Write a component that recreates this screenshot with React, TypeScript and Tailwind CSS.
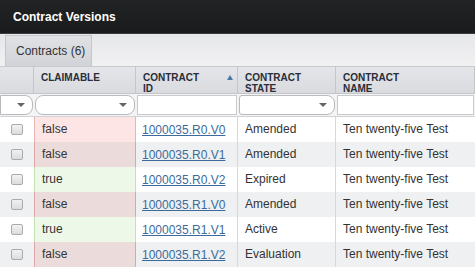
const rows = [
  { claimable: false, id: "1000035.R0.V0", state: "Amended" },
  { claimable: false, id: "1000035.R0.V1", state: "Amended" },
  { claimable: true, id: "1000035.R0.V2", state: "Expired" },
  { claimable: false, id: "1000035.R1.V0", state: "Amended" },
  { claimable: true, id: "1000035.R1.V1", state: "Active" },
  { claimable: false, id: "1000035.R1.V2", state: "Evaluation" },
]

const cols = "grid grid-cols-[34px_102px_102px_98px_1fr]"

function Caret() {
  return <span className="absolute right-[9px] top-[9px] w-0 h-0 border-l-[4px] border-r-[4px] border-t-[4px] border-l-transparent border-r-transparent border-t-[#666]" />
}

export default function App() {
  return (
    <div className="w-[475px] h-[273px] bg-white overflow-hidden font-['Liberation_Sans',Arial,sans-serif] text-[12px] text-[#333]">
      {/* title bar */}
      <div className="h-[34px] bg-gradient-to-b from-[#222325] to-[#1a1b1d] border-b border-[#3a3b3d] flex items-center px-[13px]">
        <span className="text-white font-bold text-[12px]">Contract Versions</span>
      </div>

      {/* tabs */}
      <div className="h-[33px] bg-gradient-to-b from-[#e6e7e9] to-[#f1f1f2] border-b border-[#c8cacd] flex items-end pl-[5px]">
        <div className="h-[31px] w-[87px] bg-gradient-to-b from-[#e0e2e5] to-[#d0d3d7] border-x border-t border-[#c4c6ca] flex items-center pl-[10px] text-[12px] text-[#333]">
          Contracts (6)
        </div>
      </div>

      {/* header */}
      <div className={`${cols} h-[27px] bg-gradient-to-b from-[#e3e5e8] to-[#d9dbdf] border-b border-[#c4c6ca] border-r`}>
        <div className="border-r border-[#c4c6ca]" />
        <div className="border-r border-[#c4c6ca] pl-[7px] pt-[5px] text-[10px] font-bold leading-[11px] text-[#2a2d3a]">CLAIMABLE</div>
        <div className="relative border-r border-[#c4c6ca] pl-[7px] pt-[5px] text-[10px] font-bold leading-[11px] text-[#2a2d3a]">
          CONTRACT<br />ID
          <span className="absolute right-[4px] top-[8px] w-0 h-0 border-l-[3px] border-r-[3px] border-b-[5px] border-l-transparent border-r-transparent border-b-[#4a77a8]" />
        </div>
        <div className="border-r border-[#c4c6ca] pl-[7px] pt-[5px] text-[10px] font-bold leading-[11px] text-[#2a2d3a]">CONTRACT<br />STATE</div>
        <div className="pl-[7px] pt-[5px] text-[10px] font-bold leading-[11px] text-[#2a2d3a]">CONTRACT<br />NAME</div>
      </div>

      {/* filter row */}
      <div className={`${cols} h-[23px] bg-[#f4f4f5] border-b border-[#d0d2d5]`}>
        <div className="relative pr-[1px] py-[1px]">
          <div className="h-full bg-white border border-[#b8babd] rounded-r-[8px]" />
          <Caret />
        </div>
        <div className="relative px-[1px] py-[1px]">
          <div className="h-full bg-white border border-[#b8babd] rounded-[8px]" />
          <Caret />
        </div>
        <div className="px-[1px] py-[1px]">
          <div className="h-full bg-white border border-[#c8cacd]" />
        </div>
        <div className="relative px-[1px] py-[1px]">
          <div className="h-full bg-white border border-[#b8babd] rounded-r-[8px] rounded-l-[3px]" />
          <Caret />
        </div>
        <div className="px-[1px] py-[1px]">
          <div className="h-full bg-white border border-[#c8cacd]" />
        </div>
      </div>

      {/* rows */}
      {rows.map((r, i) => {
        const odd = i % 2 === 1
        const claimBg = r.claimable
          ? "bg-[#eef8e9] border-[#c5e2b2]"
          : odd
            ? "bg-[#ecdbdb] border-[#dfa4a4]"
            : "bg-[#fde5e5] border-[#e7b3b3]"
        return (
          <div key={r.id} className={`${cols} h-[25px] ${odd ? "bg-[#eef0f2]" : "bg-white"}`}>
            <div className="flex justify-center pt-[7px]">
              <div className="w-[12px] h-[11px] rounded-[2px] border border-[#a9abae] bg-gradient-to-b from-[#f2f2f2] to-[#dcdcdc]" />
            </div>
            <div className={`border-x ${claimBg} pl-[7px] pt-[3px]`}>{r.claimable ? "true" : "false"}</div>
            <div className="border-r border-[#d6d8da] pl-[6px] pt-[4px]">
              <a href="#" className="text-[#3c6b9b] underline">{r.id}</a>
            </div>
            <div className="border-r border-[#d6d8da] pl-[7px] pt-[3px]">{r.state}</div>
            <div className="pl-[7px] pt-[3px]">Ten twenty-five Test</div>
          </div>
        )
      })}
    </div>
  )
}
